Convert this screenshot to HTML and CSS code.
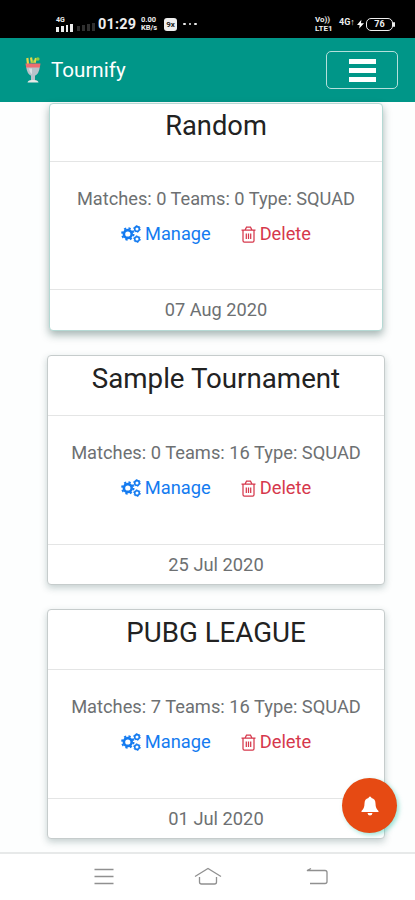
FILE: index.html
```html
<!DOCTYPE html>
<html lang="en">
<head>
  <meta charset="UTF-8" />
  <meta name="viewport" content="width=device-width, initial-scale=1.0" />
  <title>Tournify</title>
  <link rel="stylesheet" href="styles.css">
</head>
<body>
  <!-- shared icons -->
  <svg class="sprite" aria-hidden="true">
    <symbol id="cogs" viewBox="0 0 20 18">
      <circle cx="6.8" cy="9" r="3.9" fill="none" stroke="currentColor" stroke-width="2.6" />
      <circle cx="6.8" cy="9" r="5.7" fill="none" stroke="currentColor" stroke-width="2" stroke-dasharray="2.2 2.277" />
      <circle cx="16" cy="3.9" r="2.3" fill="none" stroke="currentColor" stroke-width="1.6" />
      <circle cx="16" cy="3.9" r="3.3" fill="none" stroke="currentColor" stroke-width="1" stroke-dasharray="1.7 1.756" />
      <circle cx="16" cy="14.1" r="2.3" fill="none" stroke="currentColor" stroke-width="1.6" />
      <circle cx="16" cy="14.1" r="3.3" fill="none" stroke="currentColor" stroke-width="1" stroke-dasharray="1.7 1.756" />
    </symbol>
    <symbol id="trash" viewBox="0 0 15 17">
      <path d="M.5 4h14M4.2 3.8 5.5 1.2h4l1.3 2.6M2 4.2v10.6q0 1.4 1.4 1.4h8.2q1.4 0 1.4-1.4V4.2M5.3 7.5V13M7.5 7.5V13M9.7 7.5V13" fill="none" stroke="currentColor" stroke-width="1.25" />
    </symbol>
  </svg>

  <div class="status-bar">
    <div class="status-left">
      <div class="network">
        <span class="tiny">4G</span>
        <div class="signal"><i></i><i></i><i></i><i></i></div>
      </div>
      <div class="signal dim"><i></i><i></i><i></i><i></i></div>
      <span class="time">01:29</span>
      <div class="speed"><span>0.00</span><span>KB/s</span></div>
      <span class="app-badge">9x</span>
      <div class="dots"><i></i><i></i><i></i></div>
    </div>
    <div class="status-right">
      <div class="volte"><span>Vo))</span><span>LTE1</span></div>
      <span class="four-g">4G↑</span>
      <svg class="bolt" viewBox="0 0 8 10"><path d="M5 0 0 6h3L2.5 10 8 4H4.5z" fill="#fff" /></svg>
      <div class="battery"><span>76</span></div>
    </div>
  </div>

  <header class="navbar">
    <svg class="logo" viewBox="0 0 18 30">
      <path d="M4 9 3.3 3M8 8 7 2.5M10.5 8l1.5-5" stroke="#e4d94b" stroke-width="2.2" />
      <path d="M6.5 8 9 4.5 11 8" fill="#9fc94d" />
      <circle cx="13.8" cy="4" r="1.8" fill="#8fcb3f" />
      <path d="M1.5 8.5h15l-.8 4.5H2.3z" fill="#ee6d70" />
      <path d="M2.3 12.5h13.4q-.7 6.2-4.7 8.2V25H7v-4.3q-4-2-4.7-8.2z" fill="#b8c2ca" />
      <path d="M5 13.5h3v6q-2.5-2-3-6z" fill="#dbe1e5" />
      <path d="M3.5 27.5q.5-2.5 4-2.5h3q3.5 0 4 2.5z" fill="#e8e8e6" />
    </svg>
    <span class="brand">Tournify</span>
    <button class="toggler" aria-label="Menu"><i></i><i></i><i></i></button>
  </header>

  <main class="list">
    <article class="card active">
      <h2>Random</h2>
      <div class="card-body">
        <p>Matches: 0 Teams: 0 Type: SQUAD</p>
        <div class="actions">
          <a class="manage"><svg><use href="#cogs" /></svg>Manage</a>
          <a class="delete"><svg><use href="#trash" /></svg>Delete</a>
        </div>
      </div>
      <footer>07 Aug 2020</footer>
    </article>

    <article class="card">
      <h2>Sample Tournament</h2>
      <div class="card-body">
        <p>Matches: 0 Teams: 16 Type: SQUAD</p>
        <div class="actions">
          <a class="manage"><svg><use href="#cogs" /></svg>Manage</a>
          <a class="delete"><svg><use href="#trash" /></svg>Delete</a>
        </div>
      </div>
      <footer>25 Jul 2020</footer>
    </article>

    <article class="card">
      <h2>PUBG LEAGUE</h2>
      <div class="card-body">
        <p>Matches: 7 Teams: 16 Type: SQUAD</p>
        <div class="actions">
          <a class="manage"><svg><use href="#cogs" /></svg>Manage</a>
          <a class="delete"><svg><use href="#trash" /></svg>Delete</a>
        </div>
      </div>
      <footer>01 Jul 2020</footer>
    </article>
  </main>

  <button class="fab" aria-label="Notifications">
    <svg viewBox="0 0 18 20"><path d="M9 .5q1.3 0 1.5 1.5 4 .8 4 5.5 0 5 3 7.500v1H.5v-1q3-2.500 3-7.500 0-4.700 4-5.500Q7.700.5 9 .5zM6.500 17h5q-.4 2.500-2.500 2.500T6.500 17z" fill="#fff" /></svg>
  </button>

  <nav class="android-nav">
    <svg viewBox="0 0 28 20"><path d="M4.5 2.5h19M4.5 9.5h19M4.5 16.5h19" /></svg>
    <svg viewBox="0 0 28 20"><path d="M1 9.5 14 1.5l13 8M5.500 10v5q0 2 2 2h13q2 0 2-2v-5" /></svg>
    <svg viewBox="0 0 28 20"><path d="M8 1.5 4 3.5h18q2 0 2 2v9q0 2-2 2H7" /></svg>
  </nav>
</body>
</html>
```

FILE: styles.css
```css
* {
  box-sizing: border-box;
}

body {
  margin: 0;
  height: 900px;
  overflow: hidden;
  display: flex;
  flex-direction: column;
  background: #fdfefe;
  font-family: Roboto, "Liberation Sans", sans-serif;
}

button {
  padding: 0;
  font: inherit;
}

.sprite {
  position: absolute;
  width: 0;
  height: 0;
}

/* phone status bar */
.status-bar {
  flex: none;
  height: 38px;
  padding: 10px 20px 0 56px;
  display: flex;
  justify-content: space-between;
  background: #000;
  color: #eee;
}

.status-left,
.status-right {
  height: 28px;
  display: flex;
  align-items: center;
}

.network {
  width: 17px;
  height: 15px;
  display: flex;
  flex-direction: column;
  justify-content: space-between;
}

.tiny {
  font-size: 7px;
  line-height: 6px;
  font-weight: 700;
}

.signal {
  height: 8px;
  display: flex;
  align-items: flex-end;
  gap: 2px;
}

.signal i {
  width: 3px;
  height: 5px;
  background: #eee;
}

.signal i:nth-child(2) { height: 6px; }
.signal i:nth-child(3) { height: 7px; }
.signal i:nth-child(4) { height: 8px; }

.signal.dim {
  align-self: flex-end;
  margin: 0 0 7px 4px;
  opacity: 0.2;
}

.time {
  width: 40px;
  margin-left: 3px;
  font-size: 14.5px;
  font-weight: 700;
  letter-spacing: 0.2px;
}

.speed {
  width: 16px;
  margin-left: 3px;
  display: flex;
  flex-direction: column;
  font-size: 7.5px;
  line-height: 8px;
  font-weight: 700;
}

.app-badge {
  width: 13px;
  height: 13px;
  margin-left: 7px;
  border-radius: 3px;
  background: #eee;
  color: #222;
  font-size: 8px;
  line-height: 13px;
  font-weight: 700;
  text-align: center;
}

.dots {
  margin-left: 6px;
  display: flex;
  gap: 3px;
}

.dots i {
  width: 2.5px;
  height: 2.5px;
  border-radius: 50%;
  background: #eee;
}

.volte {
  width: 21px;
  display: flex;
  flex-direction: column;
  font-size: 8px;
  line-height: 9px;
  font-weight: 700;
}

.four-g {
  width: 15px;
  margin: 0 0 4px 3px;
  font-size: 9px;
  line-height: 10px;
  font-weight: 700;
  white-space: nowrap;
}

.bolt {
  width: 7px;
  height: 10px;
  margin-left: 3px;
}

.battery {
  position: relative;
  width: 27px;
  height: 13px;
  margin: 0 2px;
  border: 1.5px solid #eee;
  border-radius: 5px;
  font-size: 9px;
  line-height: 11px;
  font-weight: 700;
  text-align: center;
}

.battery::after {
  content: "";
  position: absolute;
  right: -3px;
  top: 3px;
  width: 2px;
  height: 5px;
  border-radius: 1px;
  background: #eee;
}

/* app header */
.navbar {
  flex: none;
  height: 64px;
  padding: 0 17px 0 24px;
  display: flex;
  align-items: center;
  background: #009688;
  color: #fff;
}

.logo {
  width: 18px;
  height: 30px;
  fill: none;
}

.brand {
  margin-left: 9px;
  font-size: 20.6px;
}

.toggler {
  width: 72px;
  height: 38px;
  margin-left: auto;
  border: 1.5px solid #b4e0dc;
  border-radius: 5px;
  background: none;
  display: flex;
  flex-direction: column;
  align-items: center;
  justify-content: center;
  gap: 4px;
}

.toggler i {
  width: 27px;
  height: 5px;
  background: #fff;
}

/* tournaments */
.list {
  height: 750px;
  padding: 1px 30px 0 47px;
  display: flex;
  flex-direction: column;
  gap: 24px;
}

.card {
  flex: none;
  height: 230px;
  display: flex;
  flex-direction: column;
  border: 1px solid #c6cccc;
  border-radius: 4px;
  background: #fff;
  box-shadow: 0 3px 7px rgba(30, 70, 70, 0.25);
  text-align: center;
  font-size: 18.3px;
}

.card.active {
  height: 228px;
  margin: 0 2px;
  border-color: #b5d9d4;
  box-shadow: 0 4px 8px rgba(20, 60, 55, 0.38);
  font-size: 18.2px;
}

.card h2 {
  height: 60px;
  margin: 0;
  padding-top: 6px;
  border-bottom: 1px solid #e4e5e5;
  color: #222;
  font-size: 27.7px;
  line-height: 34px;
  font-weight: 400;
}

.card.active h2 {
  height: 58px;
  padding-top: 5px;
  font-size: 27.3px;
}

.card-body {
  flex: 1;
  padding-top: 25px;
  color: #6d7072;
}

.card-body p {
  margin: 0;
  line-height: 24px;
  white-space: nowrap;
}

.actions {
  margin-top: 11px;
  display: flex;
  justify-content: center;
  gap: 30px;
  line-height: 24px;
}

.actions a {
  display: flex;
  align-items: center;
}

.manage {
  color: #147bf0;
}

.delete {
  color: #d6384c;
}

.manage svg {
  width: 20px;
  height: 18px;
  margin-right: 4px;
}

.delete svg {
  width: 15px;
  height: 17px;
  margin-right: 4px;
}

.card footer {
  height: 40px;
  border-top: 1px solid #e4e5e5;
  color: #6d7072;
  line-height: 40px;
}

.card.active footer {
  height: 41px;
}

.fab {
  position: absolute;
  left: 342px;
  top: 778px;
  width: 55px;
  height: 55px;
  border: 0;
  border-radius: 50%;
  background: #e64a13;
  box-shadow: 2px 2px 4px rgba(60, 200, 175, 0.5);
  display: flex;
  align-items: center;
  justify-content: center;
}

.fab svg {
  width: 18px;
  height: 20px;
}

/* system buttons */
.android-nav {
  flex: none;
  height: 48px;
  padding: 13px 84px 0 90px;
  display: flex;
  justify-content: space-between;
  border-top: 2px solid #e7e9e9;
  background: #fff;
}

.android-nav svg {
  width: 28px;
  height: 20px;
  fill: none;
  stroke: #909090;
  stroke-width: 1.3;
}

.android-nav svg:nth-child(2) {
  margin-right: 5px;
}
```
